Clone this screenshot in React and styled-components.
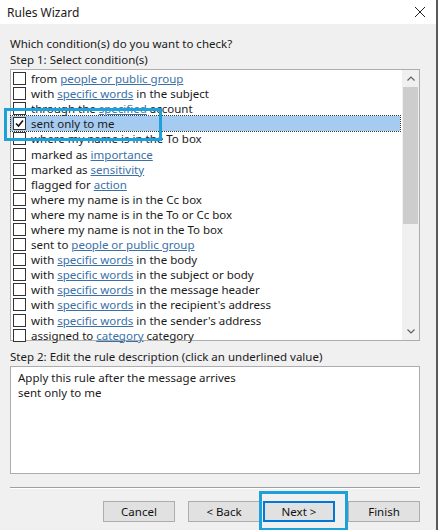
import React from "react";
import styled, { createGlobalStyle } from "styled-components";

const Global = createGlobalStyle`
  * { box-sizing: border-box; }
  html, body { margin: 0; padding: 0; background: #f0f0f0; }
  body { font-family: "Noto Sans", "Open Sans", sans-serif; font-size: 11.5px; color: #1a1a1a; }
`;

const Window = styled.div`
  position: relative;
  width: 438px;
  height: 530px;
  border-right: 2px solid #5a5a5a;
  background: #f0f0f0;
  overflow: hidden;
`;

const TitleBar = styled.div`
  height: 24px;
  background: #fff;
  display: flex;
  align-items: center;
  justify-content: space-between;
  padding: 0 10px 0 7px;
  font-size: 12px;
`;

const Body = styled.div`
  padding: 12px 16px 0 10px;
  display: flex;
  flex-direction: column;
`;

const Label = styled.div`
  height: 16px;
  line-height: 16px;
  margin-top: ${(p) => p.gap || 0}px;
`;

const ListBox = styled.div`
  margin-top: 1px;
  height: 272px;
  background: #fff;
  border: 1px solid #adadad;
  display: flex;
`;

const Rows = styled.div`
  flex: 1;
  padding-top: 1px;
`;

const Row = styled.div`
  height: 15.1px;
  display: flex;
  align-items: center;
  gap: 5px;
  padding-left: 2px;
  margin-right: 2px;
  white-space: nowrap;
  background: ${(p) => (p.selected ? "#a6cbf0" : "transparent")};
  outline: ${(p) => (p.selected ? "1px dotted #333" : "none")};
`;

const Box = styled.span`
  width: 13px;
  height: 13px;
  border: 1px solid #333;
  background: #fff;
  display: inline-flex;
  align-items: center;
  justify-content: center;
  flex-shrink: 0;
`;

const Link = styled.span`
  color: #3a70a8;
  text-decoration: underline;
`;

const Scroll = styled.div`
  width: 17px;
  background: #f0f0f0;
  display: flex;
  flex-direction: column;
  align-items: center;
`;

const Arrow = styled.div`
  height: 17px;
  display: flex;
  align-items: center;
  justify-content: center;
`;

const Thumb = styled.div`
  width: 15px;
  height: 137px;
  background: #cdcdcd;
`;

const Spacer = styled.div`
  flex: 1;
`;

const Desc = styled.div`
  margin-top: 1px;
  height: 108px;
  background: #fff;
  border: 1px solid #adadad;
  padding: 3px 7px;
  line-height: 15px;
`;

const Sep = styled.div`
  margin-top: 13px;
  border-top: 1px solid #a0a0a0;
  border-bottom: 1px solid #fff;
`;

const Buttons = styled.div`
  display: flex;
  justify-content: flex-end;
  gap: 13px;
  margin-top: 12px;
`;

const Btn = styled.button`
  width: 72px;
  height: 21px;
  font-family: inherit;
  font-size: 11.5px;
  background: #e1e1e1;
  border: 1px solid ${(p) => (p.def ? "#0078d7" : "#adadad")};
  box-shadow: ${(p) => (p.def ? "inset 0 0 0 1px #0078d7" : "none")};
  margin-left: ${(p) => (p.tight ? -10 : 0)}px;
  padding: 0;
  color: #111;
`;

const Highlight = styled.div`
  position: absolute;
  border: 3px solid #1ea0d8;
`;

const rows = [
  ["from ", <Link>people or public group</Link>],
  ["with ", <Link>specific words</Link>, " in the subject"],
  ["through the ", <Link>specified</Link>, " account"],
  ["sent only to me"],
  ["where my name is in the To box"],
  ["marked as ", <Link>importance</Link>],
  ["marked as ", <Link>sensitivity</Link>],
  ["flagged for ", <Link>action</Link>],
  ["where my name is in the Cc box"],
  ["where my name is in the To or Cc box"],
  ["where my name is not in the To box"],
  ["sent to ", <Link>people or public group</Link>],
  ["with ", <Link>specific words</Link>, " in the body"],
  ["with ", <Link>specific words</Link>, " in the subject or body"],
  ["with ", <Link>specific words</Link>, " in the message header"],
  ["with ", <Link>specific words</Link>, " in the recipient's address"],
  ["with ", <Link>specific words</Link>, " in the sender's address"],
  ["assigned to ", <Link>category</Link>, " category"],
];

export default function App() {
  return (
    <Window>
      <Global />
      <TitleBar>
        <span>Rules Wizard</span>
        <svg width="12" height="12" viewBox="0 0 12 12" stroke="#222" strokeWidth="1">
          <path d="M1 1L11 11M11 1L1 11" />
        </svg>
      </TitleBar>
      <Body>
        <Label>Which condition(s) do you want to check?</Label>
        <Label>Step 1: Select condition(s)</Label>
        <ListBox>
          <Rows>
            {rows.map((r, i) => (
              <Row key={i} selected={i === 3}>
                <Box>
                  {i === 3 && (
                    <svg width="9" height="9" viewBox="0 0 9 9">
                      <path d="M1 4.5L3.5 7L8 1.5" fill="none" stroke="#111" strokeWidth="1.6" />
                    </svg>
                  )}
                </Box>
                <span>{r.map((p, j) => <React.Fragment key={j}>{p}</React.Fragment>)}</span>
              </Row>
            ))}
          </Rows>
          <Scroll>
            <Arrow>
              <svg width="8" height="5" viewBox="0 0 8 5"><path d="M0.5 4.5L4 1L7.5 4.5" fill="none" stroke="#606060" strokeWidth="1.2" /></svg>
            </Arrow>
            <Thumb />
            <Spacer />
            <Arrow>
              <svg width="8" height="5" viewBox="0 0 8 5"><path d="M0.5 0.5L4 4L7.5 0.5" fill="none" stroke="#606060" strokeWidth="1.2" /></svg>
            </Arrow>
          </Scroll>
        </ListBox>
        <Label gap={8}>Step 2: Edit the rule description (click an underlined value)</Label>
        <Desc>
          Apply this rule after the message arrives
          <br />
          sent only to me
        </Desc>
        <Sep />
        <Buttons>
          <Btn>Cancel</Btn>
          <Btn>&lt; Back</Btn>
          <Btn def tight>Next &gt;</Btn>
          <Btn>Finish</Btn>
        </Buttons>
      </Body>
      <Highlight style={{ left: 4, top: 108, width: 158, height: 33 }} />
      <Highlight style={{ left: 259, top: 491, width: 89, height: 40 }} />
    </Window>
  );
}
